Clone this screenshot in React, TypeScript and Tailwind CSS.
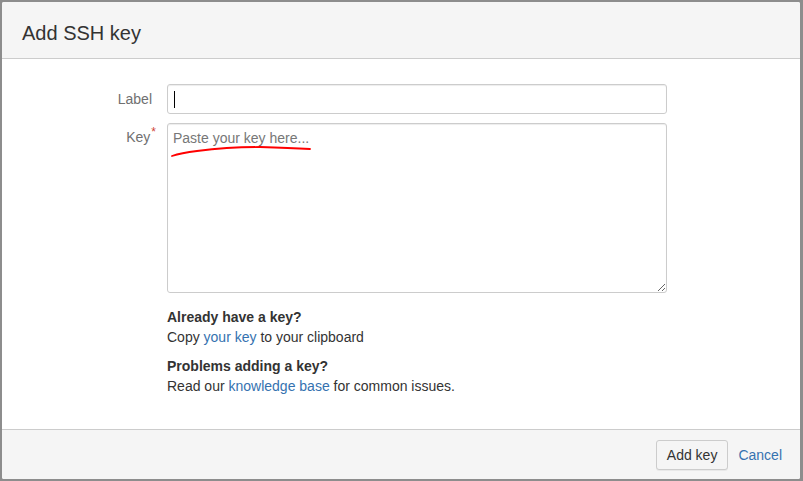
import React from "react";

export default function App() {
  return (
    <div
      className="w-[803px] h-[481px] bg-[#8d8d8d] pt-[2px] pl-[2px] pr-[3px] pb-[2px]"
      style={{ fontFamily: '"Liberation Sans", Arial, sans-serif' }}
    >
      <div className="w-full h-full bg-white flex flex-col rounded-[2px] overflow-hidden">
        <div className="h-[57px] shrink-0 bg-[#f5f5f5] border-b border-[#cccccc] flex items-center pl-[20px] pt-[5px]">
          <h1 className="text-[20px] text-[#333333] leading-none">Add SSH key</h1>
        </div>
        <div className="flex-1 pt-[25px] text-[14px] leading-[20px] text-[#333333]">
          <div className="flex items-center gap-[15px]">
            <div className="w-[150px] text-right text-[#707070]">Label</div>
            <div className="w-[500px] h-[30px] border border-[#cccccc] rounded-[3px] shadow-[inset_0_1px_1px_rgba(0,0,0,0.075)] flex items-center pl-[6px]">
              <div className="w-[1px] h-[17px] bg-black" />
            </div>
          </div>
          <div className="flex items-start gap-[11px] mt-[9px]">
            <div className="w-[154px] text-right text-[#707070] pt-[4px]">
              Key<span className="text-[#d04437] text-[12px] relative -top-[6px] ml-[1px]">*</span>
            </div>
            <div className="relative w-[500px] h-[170px]">
              <textarea
                className="w-full h-full border border-[#cccccc] rounded-[3px] shadow-[inset_0_1px_1px_rgba(0,0,0,0.075)] px-[5px] py-[4px] text-[14px] leading-[20px] outline-none placeholder:text-[#777777]"
                style={{ fontFamily: '"Liberation Sans", Arial, sans-serif' }}
                placeholder="Paste your key here..."
              />
              <svg className="absolute left-0 top-0 pointer-events-none" width="160" height="40">
                <path
                  d="M5 33 Q 14 30 30 28 Q 62 24 93 24 Q 123 25 143 26"
                  stroke="#ff0000"
                  strokeWidth="1.8"
                  fill="none"
                  strokeLinecap="round"
                />
              </svg>
            </div>
          </div>
          <div className="ml-[165px] mt-[14px]">
            <div className="font-bold">Already have a key?</div>
            <div>
              Copy <span className="text-[#3572b0]">your key</span> to your clipboard
            </div>
            <div className="font-bold mt-[9px]">Problems adding a key?</div>
            <div>
              Read our <span className="text-[#3572b0]">knowledge base</span> for common issues.
            </div>
          </div>
        </div>
        <div className="h-[50px] shrink-0 bg-[#f5f5f5] border-t border-[#cccccc] flex items-center justify-end pr-[18px] gap-[10px] text-[14px]">
          <button className="h-[30px] px-[10px] mt-[1px] bg-[#f5f5f5] border border-[#cccccc] rounded-[3px] text-[#333333] shadow-[0_1px_0_rgba(0,0,0,0.05)]">
            Add key
          </button>
          <span className="text-[#3572b0] mt-[1px]">Cancel</span>
        </div>
      </div>
    </div>
  );
}
